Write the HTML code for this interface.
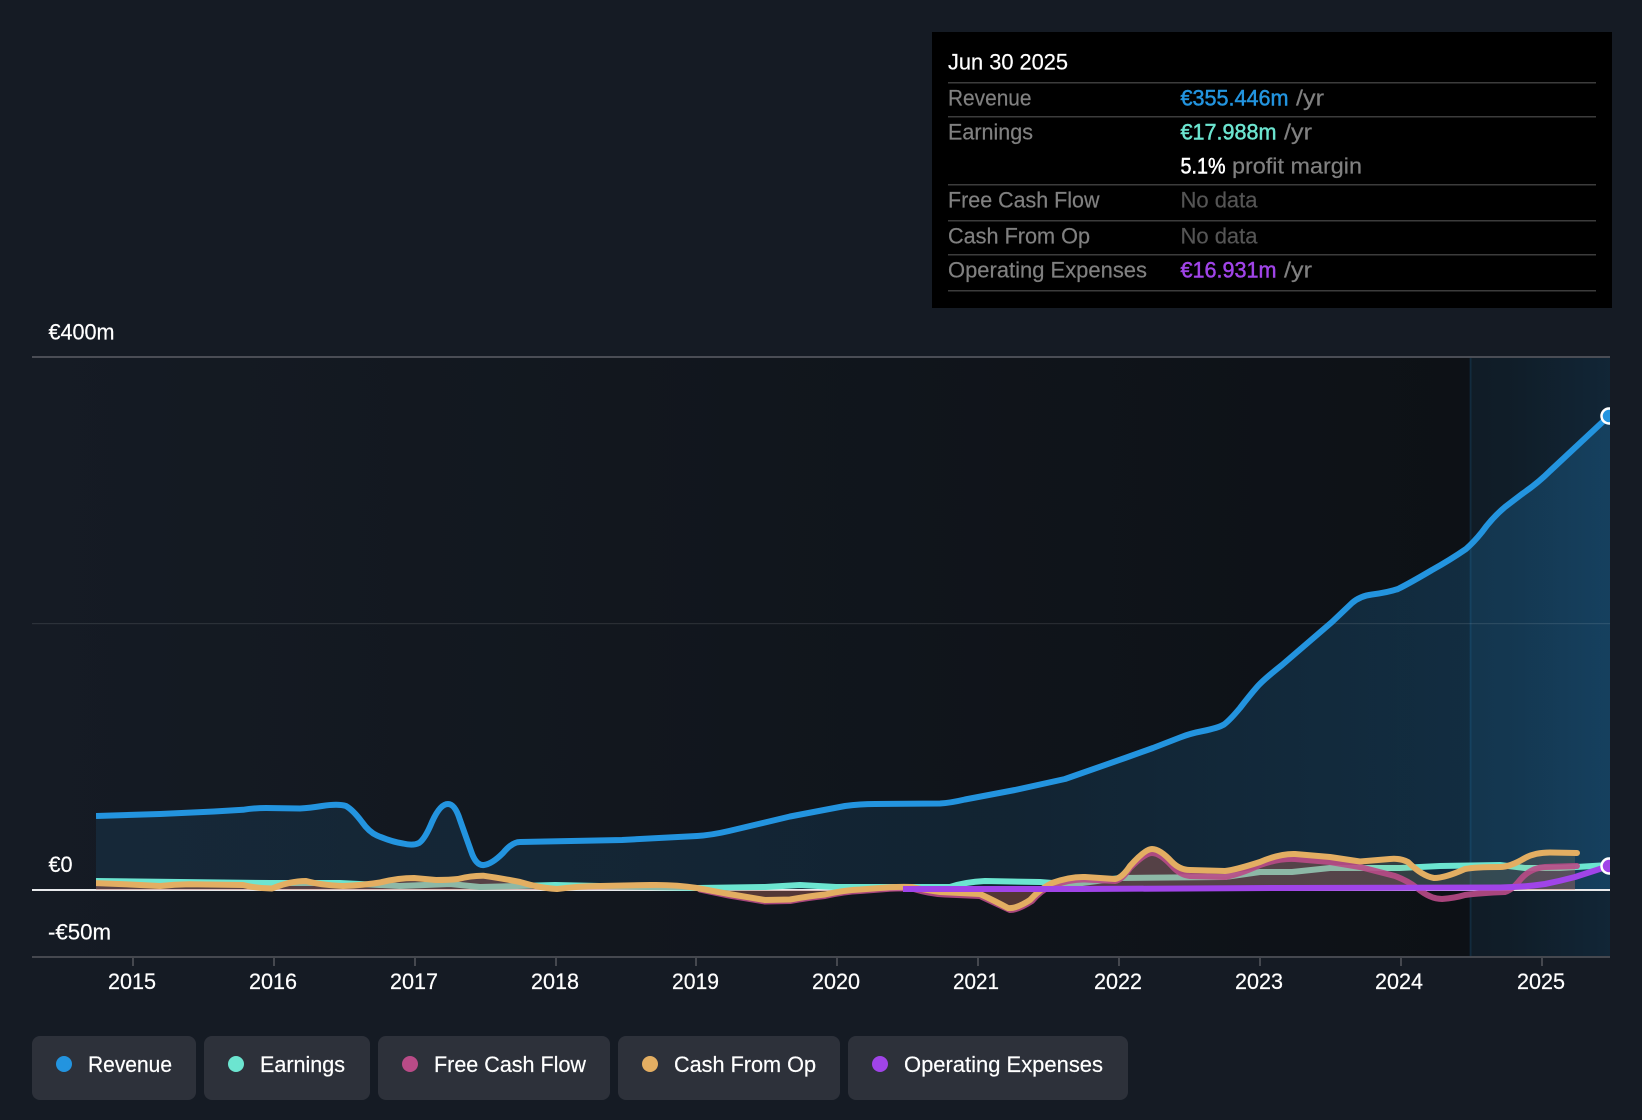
<!DOCTYPE html>
<html><head><meta charset="utf-8"><title>Chart</title>
<style>
html,body{margin:0;padding:0;background:#151b24}
svg{display:block}
text{font-family:"Liberation Sans",sans-serif;font-size:22px;fill:#fff;stroke:#fff;stroke-width:.2px}
.m{stroke-width:.5px}
.l{fill:#808080;stroke:#808080}
.n{fill:#555;stroke:#555}
</style></head><body>
<svg width="1642" height="1120" viewBox="0 0 1642 1120" xmlns="http://www.w3.org/2000/svg">
<defs>
<linearGradient id="bg" x1="0" x2="1" y1="0" y2="0"><stop offset="0" stop-color="#151b24"/><stop offset="1" stop-color="#0d1116"/></linearGradient>
<linearGradient id="band" x1="0" x2="1" y1="0" y2="0"><stop offset="0" stop-color="#23a0ff" stop-opacity=".05"/><stop offset=".3" stop-color="#23a0ff" stop-opacity=".06"/><stop offset="1" stop-color="#23a0ff" stop-opacity=".12"/></linearGradient>
<linearGradient id="rev" gradientUnits="userSpaceOnUse" x1="96" x2="1610" y1="0" y2="0"><stop offset="0" stop-color="#2394df" stop-opacity=".11"/><stop offset=".6" stop-color="#2394df" stop-opacity=".12"/><stop offset="1" stop-color="#2394df" stop-opacity=".24"/></linearGradient>
<clipPath id="c"><rect x="96" y="340" width="1514" height="620"/></clipPath>
</defs>
<rect width="1642" height="1120" fill="#151b24"/>
<rect x="32" y="357" width="1438" height="600" fill="url(#bg)"/>
<rect x="1470" y="357" width="140" height="600" fill="#0f151b"/>
<rect x="1470" y="357" width="140" height="600" fill="url(#band)"/>
<path fill="url(#rev)" d="M96 816L160 814L214 811.5L243 809.8Q254 808 266 808L300 808.5Q310 808 322 806Q338 803.5 346 806Q353 810 362 822Q369 832 377 835.5Q392 842 403 843.5Q413 846 419 843Q425 839 432 822Q440 804 448 804Q455 804 460 820L471 851Q476 866 484 865Q492 864 503 853Q512 842 520 842L622 840L697 836Q712 835 729 831L790 816.5L845 806Q860 804 875 804L940 803.5Q950 803 965 799.5L1015 790L1065 779L1125 758L1153 748L1180 737.5Q1190 733.5 1203 731Q1218 728 1224 724.5Q1230 720 1240 708Q1250 695 1257 687Q1263 680 1282 665L1332 622L1352 603Q1360 596 1372 594.5Q1388 592.5 1398 589Q1410 583 1432 570Q1450 560 1466 549Q1474 542 1482 532Q1492 518 1505 507L1522 494Q1538 483 1550 471L1609 416L1610 416L1610 890L96 890Z"/>
<rect x="1469.5" y="357" width="2" height="600" fill="#2394df" opacity=".13"/>
<rect x="32" y="623" width="1578" height="1.2" fill="#fff" opacity=".1"/>
<rect x="32" y="356" width="1578" height="2" fill="#4a4d55"/>
<rect x="32" y="889" width="1578" height="2" fill="#e8eaec"/>
<g clip-path="url(#c)" fill="none" stroke-linecap="butt" stroke-linejoin="round" stroke-width="6">
<path stroke="#2394df" d="M96 816L160 814L214 811.5L243 809.8Q254 808 266 808L300 808.5Q310 808 322 806Q338 803.5 346 806Q353 810 362 822Q369 832 377 835.5Q392 842 403 843.5Q413 846 419 843Q425 839 432 822Q440 804 448 804Q455 804 460 820L471 851Q476 866 484 865Q492 864 503 853Q512 842 520 842L622 840L697 836Q712 835 729 831L790 816.5L845 806Q860 804 875 804L940 803.5Q950 803 965 799.5L1015 790L1065 779L1125 758L1153 748L1180 737.5Q1190 733.5 1203 731Q1218 728 1224 724.5Q1230 720 1240 708Q1250 695 1257 687Q1263 680 1282 665L1332 622L1352 603Q1360 596 1372 594.5Q1388 592.5 1398 589Q1410 583 1432 570Q1450 560 1466 549Q1474 542 1482 532Q1492 518 1505 507L1522 494Q1538 483 1550 471L1609 416"/>
<path stroke="#6ce5d0" d="M96 881L270 883L340 883L400 886L450 884L480 887L555 885L600 886L697 888L765 887L800 885L836 887L900 887L950 887Q965 882 985 881L1040 882L1065 884L1082 883L1120 878L1225 877L1260 872L1292 872L1330 868L1400 868L1440 866L1500 865L1525 868L1560 868L1609 865"/>
<path fill="#b04060" fill-opacity=".26" stroke="none" d="M96 890L96 884L240 886L272 889L306 881L345 886L414 878L448 880L482 876L520 882L555 889L660 885L697 888L729 895.5L765 901.5L790 901Q810 897.5 825 896Q845 891.5 860 891L880 889.5Q895 888 912 888.5Q930 894 945 894.5L980 896Q995 903 1010 910Q1018 910 1032 901Q1042 889 1054 885Q1072 879 1085 879.5L1115 881Q1122 880 1130 868Q1145 853 1152 853Q1160 853 1172 866Q1180 875 1190 876L1225 877Q1240 874 1260 865Q1280 858 1295 859L1330 862L1360 867L1395 876Q1408 881 1417 888L1430 890L1515 890L1520 880Q1530 868 1545 867L1575 866L1575 890Z"/>
<path fill="#e3ae62" fill-opacity=".16" stroke="none" d="M96 890L96 883L243 885Q258 888.5 272 888.5Q290 881 306 881Q320 885 343 886Q365 885 380 882.5Q398 878 414 878L436 880Q450 880 458 879Q472 875.5 484 875.8Q500 878 520 882Q540 888 557 889Q580 886 600 886L650 885Q675 884.5 697 888L729 894L765 900L790 899.5Q810 896 825 894.5Q845 890 860 889.5L880 888Q895 886.5 912 887Q925 890 940 892L980 894Q995 901 1008 908Q1016 909 1030 900Q1040 889 1052 883Q1070 876.5 1085 877L1115 879Q1122 878 1130 866Q1145 849 1152 849Q1160 849 1172 862Q1180 870 1190 870L1225 871Q1235 870 1260 862Q1280 853.5 1295 854L1330 857L1360 861.5L1390 859Q1400 858 1408 862Q1422 876 1434 878Q1445 878 1465 869Q1475 867 1500 867Q1510 867 1525 858Q1535 852.5 1550 852.5L1575 853L1575 890Z"/>
<path stroke="#b94b87" stroke-opacity=".9" stroke-linecap="round" d="M700 889.5L729 895.5L765 901.5L790 901Q810 897.5 825 896Q845 891.5 860 891L880 889.5Q895 888 912 888.5Q930 894 945 894.5L980 896Q995 903 1010 910Q1018 910 1032 901Q1042 889 1054 885Q1072 879 1085 879.5L1115 881Q1122 880 1130 868Q1145 853 1152 853Q1160 853 1172 866Q1180 875 1190 876L1225 877Q1240 874 1260 865Q1280 858 1295 859L1330 862L1360 867L1395 876Q1408 881 1417 888Q1430 899 1442 899Q1455 898 1465 895Q1480 893 1505 892Q1512 890 1520 880Q1530 868 1545 867L1577 866"/>
<path stroke="#e3ae62" stroke-linecap="round" d="M92 883L130 884.5L160 886Q175 884.5 189 884.3L243 885Q258 888.5 272 888.5Q290 881 306 881Q320 885 343 886Q365 885 380 882.5Q398 878 414 878L436 880Q450 880 458 879Q472 875.5 484 875.8Q500 878 520 882Q540 888 557 889Q580 886 600 886L650 885Q675 884.5 697 888L729 894L765 900L790 899.5Q810 896 825 894.5Q845 890 860 889.5L880 888Q895 886.5 912 887Q925 890 940 892L980 894Q995 901 1008 908Q1016 909 1030 900Q1040 889 1052 883Q1070 876.5 1085 877L1115 879Q1122 878 1130 866Q1145 849 1152 849Q1160 849 1172 862Q1180 870 1190 870L1225 871Q1235 870 1260 862Q1280 853.5 1295 854L1330 857L1360 861.5L1390 859Q1400 858 1408 862Q1422 876 1434 878Q1445 878 1465 869Q1475 867 1500 867Q1510 867 1525 858Q1535 852.5 1550 852.5L1577 853"/>
<path stroke="#a044e8" d="M903 889L1082 889L1280 888L1500 887.5Q1525 887 1545 884Q1560 881 1575 877L1609 866"/>
<circle cx="1609" cy="416" r="7.5" fill="#2394df" stroke="#fff" stroke-width="2.5"/>
<circle cx="1609" cy="866" r="7.5" fill="#a044e8" stroke="#fff" stroke-width="2.5"/>
</g>
<rect x="32" y="956" width="1578" height="2" fill="#45484f"/>
<g fill="#45484f"><rect x="132" y="957" width="2" height="9"/><rect x="273" y="957" width="2" height="9"/><rect x="414" y="957" width="2" height="9"/><rect x="555" y="957" width="2" height="9"/><rect x="695" y="957" width="2" height="9"/><rect x="836" y="957" width="2" height="9"/><rect x="977" y="957" width="2" height="9"/><rect x="1118" y="957" width="2" height="9"/><rect x="1259" y="957" width="2" height="9"/><rect x="1400" y="957" width="2" height="9"/><rect x="1541" y="957" width="2" height="9"/></g>
<text x="48.5" y="339.5" textLength="66" lengthAdjust="spacingAndGlyphs">€400m</text>
<text x="48.5" y="872" textLength="24" lengthAdjust="spacingAndGlyphs">€0</text>
<text x="48" y="939.5" textLength="63" lengthAdjust="spacingAndGlyphs">-€50m</text>
<text x="108" y="989" textLength="48" lengthAdjust="spacingAndGlyphs">2015</text>
<text x="249" y="989" textLength="48" lengthAdjust="spacingAndGlyphs">2016</text>
<text x="390" y="989" textLength="48" lengthAdjust="spacingAndGlyphs">2017</text>
<text x="531" y="989" textLength="48" lengthAdjust="spacingAndGlyphs">2018</text>
<text x="672" y="989" textLength="47" lengthAdjust="spacingAndGlyphs">2019</text>
<text x="812" y="989" textLength="48" lengthAdjust="spacingAndGlyphs">2020</text>
<text x="953" y="989" textLength="46" lengthAdjust="spacingAndGlyphs">2021</text>
<text x="1094" y="989" textLength="48" lengthAdjust="spacingAndGlyphs">2022</text>
<text x="1235" y="989" textLength="48" lengthAdjust="spacingAndGlyphs">2023</text>
<text x="1375" y="989" textLength="48" lengthAdjust="spacingAndGlyphs">2024</text>
<text x="1517" y="989" textLength="48" lengthAdjust="spacingAndGlyphs">2025</text>
<g fill="#2d313a"><rect x="32" y="1036" width="164" height="64" rx="8"/><rect x="204" y="1036" width="166" height="64" rx="8"/><rect x="378" y="1036" width="232" height="64" rx="8"/><rect x="618" y="1036" width="222" height="64" rx="8"/><rect x="848" y="1036" width="280" height="64" rx="8"/></g>
<circle cx="64" cy="1064" r="8" fill="#2394df"/><circle cx="236" cy="1064" r="8" fill="#6ce5d0"/><circle cx="410" cy="1064" r="8" fill="#b94b87"/><circle cx="650" cy="1064" r="8" fill="#e3ae62"/><circle cx="880" cy="1064" r="8" fill="#a044e8"/>
<text x="88" y="1072" textLength="84" lengthAdjust="spacingAndGlyphs">Revenue</text>
<text x="260" y="1072" textLength="85" lengthAdjust="spacingAndGlyphs">Earnings</text>
<text x="434" y="1072" textLength="152" lengthAdjust="spacingAndGlyphs">Free Cash Flow</text>
<text x="674" y="1072" textLength="142" lengthAdjust="spacingAndGlyphs">Cash From Op</text>
<text x="904" y="1072" textLength="199" lengthAdjust="spacingAndGlyphs">Operating Expenses</text>
<rect x="932" y="32" width="680" height="276" fill="#000"/>
<g fill="#3c3c3c"><rect x="948" y="82" width="648" height="1.5"/><rect x="948" y="116" width="648" height="1.5"/><rect x="948" y="184" width="648" height="1.5"/><rect x="948" y="220" width="648" height="1.5"/><rect x="948" y="254" width="648" height="1.5"/><rect x="948" y="290" width="648" height="1.5"/></g>
<text x="948" y="69.5" textLength="120" lengthAdjust="spacingAndGlyphs">Jun 30 2025</text>
<text class="l" x="948" y="105.5" textLength="83.5" lengthAdjust="spacingAndGlyphs">Revenue</text>
<text class="l" x="948" y="139.5" textLength="85" lengthAdjust="spacingAndGlyphs">Earnings</text>
<text class="l" x="948" y="207.5" textLength="151.5" lengthAdjust="spacingAndGlyphs">Free Cash Flow</text>
<text class="l" x="948" y="243.5" textLength="142" lengthAdjust="spacingAndGlyphs">Cash From Op</text>
<text class="l" x="948" y="277.5" textLength="199" lengthAdjust="spacingAndGlyphs">Operating Expenses</text>
<text class="m" style="fill:#2394df;stroke:#2394df" x="1180.5" y="105.5" textLength="108" lengthAdjust="spacingAndGlyphs">€355.446m</text>
<text class="l" x="1296" y="105.5" textLength="28" lengthAdjust="spacingAndGlyphs">/yr</text>
<text class="m" style="fill:#6ce5d0;stroke:#6ce5d0" x="1180.5" y="139.5" textLength="96" lengthAdjust="spacingAndGlyphs">€17.988m</text>
<text class="l" x="1284" y="139.5" textLength="28" lengthAdjust="spacingAndGlyphs">/yr</text>
<text class="m" x="1180.5" y="173.5" textLength="45" lengthAdjust="spacingAndGlyphs">5.1%</text>
<text class="l" x="1232" y="173.5" textLength="130" lengthAdjust="spacingAndGlyphs">profit margin</text>
<text class="n" x="1180.5" y="207.5" textLength="77" lengthAdjust="spacingAndGlyphs">No data</text>
<text class="n" x="1180.5" y="243.5" textLength="77" lengthAdjust="spacingAndGlyphs">No data</text>
<text class="m" style="fill:#a044e8;stroke:#a044e8" x="1180.5" y="277.5" textLength="96" lengthAdjust="spacingAndGlyphs">€16.931m</text>
<text class="l" x="1284" y="277.5" textLength="28" lengthAdjust="spacingAndGlyphs">/yr</text>
</svg>
</body></html>
